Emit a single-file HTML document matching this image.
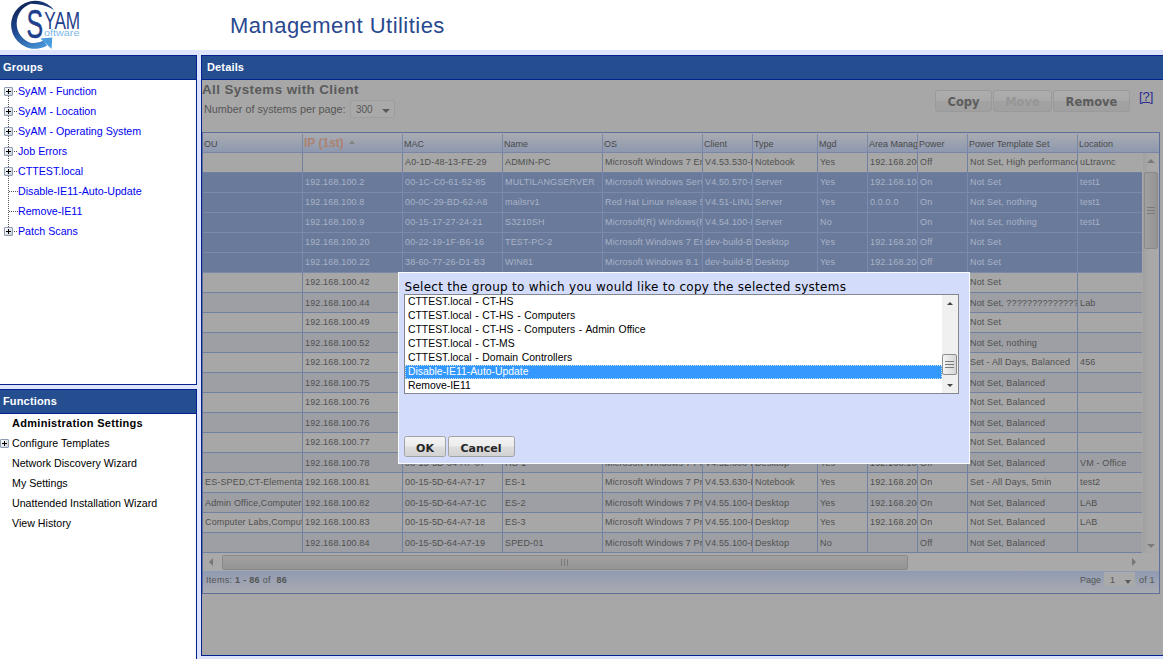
<!DOCTYPE html>
<html lang="en"><head><meta charset="utf-8"><title>Management Utilities</title>
<style>
html,body{margin:0;padding:0}
body{width:1163px;height:659px;overflow:hidden;position:relative;background:#dde4fb;font-family:"Liberation Sans",Arial,sans-serif;font-size:11px;color:#000}
div,span,i,a{box-sizing:border-box}
#hdr{position:absolute;left:0;top:0;width:1163px;height:50px;background:#fff}
#logo{position:absolute;left:0;top:0}
#title{position:absolute;left:230px;top:11px;font-size:22px;line-height:30px;color:#29498f;white-space:nowrap;letter-spacing:0.47px;font-family:"Liberation Sans",Arial,sans-serif}
.panel{position:absolute;border:1px solid #04228f;background:#fff;overflow:hidden}
.bar{position:absolute;left:0;top:0;right:0;height:23px;background:#254e91;border-bottom:1px solid #04228f;height:24px;color:#fff;font-weight:bold;font-size:11px;letter-spacing:0.15px;line-height:23px;padding-left:3px}
#groups{left:-1px;top:55px;width:198px;height:330px}
#funcs{left:-1px;top:389px;width:198px;height:300px}
#details{left:201px;top:55px;width:1000px;height:601px}
#details .bar{padding-left:5px}
/* tree */
.tn{position:absolute;left:0;height:20px;font-size:10.67px;line-height:20px;color:#0000f0;white-space:nowrap}
.tn .t{position:absolute;left:18px;top:-1px}
.pm{position:absolute;left:4px;top:5px;width:9px;height:9px;border:1px solid #8d9bb0;background:linear-gradient(135deg,#fff,#c9cfd8);border-radius:1px}
.pm:before{content:"";position:absolute;left:1px;top:3px;width:5px;height:1px;background:#000}
.pm:after{content:"";position:absolute;left:3px;top:1px;width:1px;height:5px;background:#000}
.dv{position:absolute;left:8px;width:1px;background-image:linear-gradient(#555 50%,transparent 50%);background-size:1px 2px}
.dh{position:absolute;top:9px;height:1px;background-image:linear-gradient(90deg,#555 50%,transparent 50%);background-size:2px 1px}
/* functions */
.fn{position:absolute;left:12px;height:20px;line-height:20px;font-size:10.67px;margin-top:-1px;color:#000;white-space:nowrap}
.fn.b{font-weight:bold;font-size:11px;letter-spacing:0.3px;margin-top:-1px}
/* overlay content */
#ov{position:absolute;left:0;top:24px;width:1000px;height:576px;background:#a7a7a7}
#h1{position:absolute;left:0px;top:1px;font-weight:bold;font-size:13.33px;letter-spacing:0.45px;line-height:18px;color:#5a5a5a;white-space:nowrap}
#npp{position:absolute;left:2px;top:21px;font-size:10.8px;line-height:16px;color:#565656;white-space:nowrap}
#sel300{position:absolute;left:148px;top:20px;width:45px;height:18px;border:1px solid #9e9e9e;border-radius:2px;background:#a9a9a9;font-size:10px;line-height:18px;color:#565656;padding-left:5px}
#sel300 i{position:absolute;right:4px;top:8px;border:4px solid transparent;border-top:4px solid #5a5a5a;border-bottom:0}
.btn{position:absolute;top:10px;height:22px;border:1px solid #9a9a9a;border-radius:3px;background:linear-gradient(#adadad 0,#a9a9a9 48%,#a2a2a2 52%,#a0a0a0);font-family:"DejaVu Sans",Verdana,sans-serif;font-weight:bold;font-size:11.5px;line-height:22px;text-align:center;color:#5c5c5c}
.btn.dis{color:#969696}
#help{position:absolute;left:937px;top:9px;font-size:13px;line-height:16px;color:#2b2b8f;text-decoration:underline}
/* grid */
#grid{position:absolute;left:0px;top:52px;width:958px;height:462px;border:1px solid #606f97;background:#a7a7a7;overflow:hidden}
#ghead{position:absolute;left:0;top:0;width:956px;height:20px;background:linear-gradient(#aaacb1,#8d98af);border-bottom:1px solid #7986a8}
.hc{position:absolute;top:1px;height:18px;font-size:9px;line-height:20px;color:#4a4a4a;padding-left:1px;white-space:nowrap;overflow:hidden;border-left:1px solid #7c88a8}
.hc:first-child{border-left:0;padding-left:1px}
.hc.sorted{font-size:12px;font-weight:bold;color:#ac8370;line-height:19px}
.sortup{display:inline-block;margin-left:5px;border:3.7px solid transparent;border-bottom:4.3px solid #868686;border-top:0;position:relative;top:-3px}
#gbody{position:absolute;left:0;top:20px;width:939px;height:400px;overflow:hidden}
.r{position:absolute;left:0;width:939px;height:20px;border-bottom:1px solid #7081a1;background:#a7a7a7}
.r.alt{background:#9d9fa4}
.r.sel{background:#697a9a;border-bottom-color:#7b8aaa}
.c{position:absolute;top:0;height:19px;font-size:9px;letter-spacing:0.15px;line-height:18px;color:#505050;padding-left:2px;white-space:pre;overflow:hidden;border-right:1px solid #7081a1}
.r.alt .c{line-height:20px}
.r.sel .c{color:#a9b3c8;border-right-color:#7b8aaa}
/* scrollbars */
#vsb{position:absolute;left:940px;top:20px;width:17px;height:400px;background:linear-gradient(90deg,#a0a0a0,#a8a8a8 35%)}
#hsb{position:absolute;left:0;top:420px;width:956px;height:18px;background:#a9a9a9}
.au,.ad,.al,.ar{position:absolute;width:0;height:0;border:4px solid transparent}
#vsb .au{left:4px;top:6px;border-bottom:4px solid #7a7a7a;border-top:0}
#vsb .ad{left:4px;bottom:5px;border-top:4px solid #7a7a7a;border-bottom:0}
#vsb .vth{position:absolute;left:1px;top:19px;width:14px;height:77px;border:1px solid #8a8a8a;border-radius:2px;background:linear-gradient(90deg,#a0a0a0,#949494)}
.vth i{position:absolute;left:2px;right:2px;top:50%;margin-top:-4px;height:7px;background:linear-gradient(#7a7a7a 1px,transparent 1px);background-size:100% 3px}
#hsb .al{left:6px;top:5px;border-right:4px solid #777;border-left:0}
#hsb .ar{right:23px;top:5px;border-left:4px solid #777;border-right:0}
#hsb .hth{position:absolute;left:19px;top:2px;width:686px;height:15px;border:1px solid #8a8a8a;border-radius:2px;background:linear-gradient(#a0a0a0,#949494)}
.hth i{position:absolute;top:3px;bottom:3px;left:50%;margin-left:-4px;width:7px;background:linear-gradient(90deg,#7a7a7a 1px,transparent 1px);background-size:3px 100%}
#pager{position:absolute;left:0;top:438px;width:956px;height:22px;background:linear-gradient(#909ab2,#a9abb0);font-size:9px;line-height:19px;color:#555}
#items{position:absolute;left:3px;top:0;white-space:pre;letter-spacing:0.3px}
#pg{position:absolute;left:877px;top:0}
#pgsel{position:absolute;left:901px;top:1px;width:31px;height:14px;background:#aaaaaa;line-height:17px;padding-left:6px}
#pgsel i{position:absolute;right:4px;top:8px;border:3.7px solid transparent;border-top:4px solid #5a5a5a;border-bottom:0}
#pgof{position:absolute;left:936px;top:0;white-space:nowrap;letter-spacing:0.2px}
/* dialog */
#dlg{position:absolute;left:398px;top:272px;width:572px;height:192px;background:#d3dcfb;border:1px solid #fbfcff}
#dt{position:absolute;left:5.5px;top:5px;font-family:"DejaVu Sans",Verdana,sans-serif;font-size:12px;letter-spacing:0.265px;line-height:18px;color:#000;white-space:nowrap}
#lb{position:absolute;left:5px;top:21px;width:555px;height:100px;border:1px solid #828790;background:#fff;overflow:hidden}
.li{height:14px;line-height:14px;font-size:10.4px;word-spacing:0.8px;padding-left:3px;width:537px;white-space:nowrap;color:#000}
.li.on{background:#3399ff;color:#fff;outline:1px dotted #cde;outline-offset:-1px}
#lsb{position:absolute;right:0;top:0;width:16px;height:98px;background:#f0f0f0}
#lsb .au{left:4.5px;top:7px;border-width:3.5px;border-bottom:3.5px solid #444;border-top:0}
#lsb .ad{left:4.5px;bottom:6px;border-width:3.5px;border-top:3.5px solid #444;border-bottom:0}
#lsb .vth{position:absolute;left:0px;top:59px;width:15px;height:21px;border:1px solid #8e8e8e;border-radius:2px;background:linear-gradient(90deg,#f4f4f4,#d6d6d6)}
.dbtn{position:absolute;top:163px;height:21px;padding-top:1px;border:1px solid #a3a3a3;border-radius:2.5px;background:linear-gradient(#f4f4f4 0,#ececec 45%,#dddddd 55%,#d2d2d2);font-family:"DejaVu Sans",Verdana,sans-serif;font-weight:bold;font-size:11px;line-height:22px;text-align:center;color:#262626}

.c:last-child{border-right:0}

</style></head>
<body>
<div id="hdr">
<svg id="logo" width="100" height="50" viewBox="0 0 100 50">
<defs><linearGradient id="lg" x1="0.1" y1="0" x2="0.6" y2="1"><stop offset="0" stop-color="#0a1d4a"/><stop offset="0.5" stop-color="#1f4790"/><stop offset="1" stop-color="#4590d2"/></linearGradient></defs>
<g transform="translate(0,0.5)"><path d="M54 9.5 A24 24 0 1 0 47 45.2 L43.5 40 C40 42 35 42.62 31 42.62 A20.66 20.66 0 0 1 31 3.3 Q44 3.4 54 9.5 Z" fill="url(#lg)"/>
<path d="M40.5 38 L52.3 37 L51.6 48.4 Z" fill="#4a9bdb"/></g>
<text x="26.6" y="38.3" font-family="Liberation Sans, Arial, sans-serif" font-size="40" fill="#1f3f8c" stroke="#1f3f8c" stroke-width="0.5" textLength="16.6" lengthAdjust="spacingAndGlyphs">S</text>
<text x="44.2" y="28.5" font-family="Liberation Sans, Arial, sans-serif" font-size="23" fill="#1f3f8c" textLength="36" lengthAdjust="spacingAndGlyphs">YAM</text>
<text x="44" y="36" font-family="Liberation Sans, Arial, sans-serif" font-size="9" fill="#7db8e8" textLength="35.5" lengthAdjust="spacingAndGlyphs">oftware</text>
</svg>
<div id="title">Management Utilities</div>
</div>
<div class="panel" id="groups"><div class="bar">Groups</div>
<div class="dv" style="top:40px;height:131px"></div>
<div class="tn" style="top:26px"><i class="pm"></i><i class="dh" style="left:14px;width:4px"></i><span class="t">SyAM - Function</span></div>
<div class="tn" style="top:46px"><i class="pm"></i><i class="dh" style="left:14px;width:4px"></i><span class="t">SyAM - Location</span></div>
<div class="tn" style="top:66px"><i class="pm"></i><i class="dh" style="left:14px;width:4px"></i><span class="t">SyAM - Operating System</span></div>
<div class="tn" style="top:86px"><i class="pm"></i><i class="dh" style="left:14px;width:4px"></i><span class="t">Job Errors</span></div>
<div class="tn" style="top:106px"><i class="pm"></i><i class="dh" style="left:14px;width:4px"></i><span class="t">CTTEST.local</span></div>
<div class="tn" style="top:126px"><i class="dh" style="left:9px;width:9px"></i><span class="t">Disable-IE11-Auto-Update</span></div>
<div class="tn" style="top:146px"><i class="dh" style="left:9px;width:9px"></i><span class="t">Remove-IE11</span></div>
<div class="tn" style="top:166px"><i class="pm"></i><i class="dh" style="left:14px;width:4px"></i><span class="t">Patch Scans</span></div>
</div>
<div class="panel" id="funcs"><div class="bar">Functions</div>
<div class="fn b" style="top:24px">Administration Settings</div>
<div class="fn" style="top:44px"><i class="pm" style="left:-12px;top:6px"></i>Configure Templates</div>
<div class="fn" style="top:64px">Network Discovery Wizard</div>
<div class="fn" style="top:84px">My Settings</div>
<div class="fn" style="top:104px">Unattended Installation Wizard</div>
<div class="fn" style="top:124px">View History</div>
</div>
<div class="panel" id="details"><div class="bar">Details</div>
<div id="ov">
<div id="h1">All Systems with Client</div>
<div id="npp">Number of systems per page:</div>
<div id="sel300">300<i></i></div>
<div class="btn" style="left:733px;width:57px">Copy</div>
<div class="btn dis" style="left:791px;width:59px">Move</div>
<div class="btn" style="left:851px;width:77px">Remove</div>
<a id="help">[?]</a>
<div id="grid">
<div id="ghead">
<div class="hc" style="left:0px;width:100px">OU</div>
<div class="hc sorted" style="left:99px;width:100px">IP (1st)<i class="sortup"></i></div>
<div class="hc" style="left:199px;width:100px">MAC</div>
<div class="hc" style="left:299px;width:100px">Name</div>
<div class="hc" style="left:399px;width:100px">OS</div>
<div class="hc" style="left:499px;width:50px">Client</div>
<div class="hc" style="left:549px;width:65px">Type</div>
<div class="hc" style="left:614px;width:50px">Mgd</div>
<div class="hc" style="left:664px;width:50px">Area Managed</div>
<div class="hc" style="left:714px;width:50px">Power</div>
<div class="hc" style="left:764px;width:110px">Power Template Set</div>
<div class="hc" style="left:874px;width:82px">Location</div>
</div>
<div id="gbody">
<div class="r" style="top:0px"><span class="c" style="left:0px;width:100px"></span><span class="c" style="left:100px;width:100px"></span><span class="c" style="left:200px;width:100px">A0-1D-48-13-FE-29</span><span class="c" style="left:300px;width:100px">ADMIN-PC</span><span class="c" style="left:400px;width:100px">Microsoft Windows 7 Enterprise</span><span class="c" style="left:500px;width:50px">V4.53.530-BUILD</span><span class="c" style="left:550px;width:65px">Notebook</span><span class="c" style="left:615px;width:50px">Yes</span><span class="c" style="left:665px;width:50px">192.168.200.1</span><span class="c" style="left:715px;width:50px">Off</span><span class="c" style="left:765px;width:110px">Not Set, High performance</span><span class="c" style="left:875px;width:64px">uLtravnc</span></div>
<div class="r sel" style="top:20px"><span class="c" style="left:0px;width:100px"></span><span class="c" style="left:100px;width:100px">192.168.100.2</span><span class="c" style="left:200px;width:100px">00-1C-C0-61-52-85</span><span class="c" style="left:300px;width:100px">MULTILANGSERVER</span><span class="c" style="left:400px;width:100px">Microsoft Windows Server 2008 R2</span><span class="c" style="left:500px;width:50px">V4.50.570-BUILD</span><span class="c" style="left:550px;width:65px">Server</span><span class="c" style="left:615px;width:50px">Yes</span><span class="c" style="left:665px;width:50px">192.168.100.1</span><span class="c" style="left:715px;width:50px">On</span><span class="c" style="left:765px;width:110px">Not Set</span><span class="c" style="left:875px;width:64px">test1</span></div>
<div class="r sel" style="top:40px"><span class="c" style="left:0px;width:100px"></span><span class="c" style="left:100px;width:100px">192.168.100.8</span><span class="c" style="left:200px;width:100px">00-0C-29-BD-62-A8</span><span class="c" style="left:300px;width:100px">mailsrv1</span><span class="c" style="left:400px;width:100px">Red Hat Linux release 5.4</span><span class="c" style="left:500px;width:50px">V4.51-LINUX</span><span class="c" style="left:550px;width:65px">Server</span><span class="c" style="left:615px;width:50px">Yes</span><span class="c" style="left:665px;width:50px">0.0.0.0</span><span class="c" style="left:715px;width:50px">On</span><span class="c" style="left:765px;width:110px">Not Set, nothing</span><span class="c" style="left:875px;width:64px">test1</span></div>
<div class="r sel" style="top:60px"><span class="c" style="left:0px;width:100px"></span><span class="c" style="left:100px;width:100px">192.168.100.9</span><span class="c" style="left:200px;width:100px">00-15-17-27-24-21</span><span class="c" style="left:300px;width:100px">S3210SH</span><span class="c" style="left:400px;width:100px">Microsoft(R) Windows(R) Server 2003</span><span class="c" style="left:500px;width:50px">V4.54.100-BUILD</span><span class="c" style="left:550px;width:65px">Server</span><span class="c" style="left:615px;width:50px">No</span><span class="c" style="left:665px;width:50px"></span><span class="c" style="left:715px;width:50px">On</span><span class="c" style="left:765px;width:110px">Not Set, nothing</span><span class="c" style="left:875px;width:64px">test1</span></div>
<div class="r sel" style="top:80px"><span class="c" style="left:0px;width:100px"></span><span class="c" style="left:100px;width:100px">192.168.100.20</span><span class="c" style="left:200px;width:100px">00-22-19-1F-B6-16</span><span class="c" style="left:300px;width:100px">TEST-PC-2</span><span class="c" style="left:400px;width:100px">Microsoft Windows 7 Enterprise</span><span class="c" style="left:500px;width:50px">dev-build-BETA</span><span class="c" style="left:550px;width:65px">Desktop</span><span class="c" style="left:615px;width:50px">Yes</span><span class="c" style="left:665px;width:50px">192.168.200.1</span><span class="c" style="left:715px;width:50px">Off</span><span class="c" style="left:765px;width:110px">Not Set</span><span class="c" style="left:875px;width:64px"></span></div>
<div class="r sel" style="top:100px"><span class="c" style="left:0px;width:100px"></span><span class="c" style="left:100px;width:100px">192.168.100.22</span><span class="c" style="left:200px;width:100px">38-60-77-26-D1-B3</span><span class="c" style="left:300px;width:100px">WIN81</span><span class="c" style="left:400px;width:100px">Microsoft Windows 8.1 Pro</span><span class="c" style="left:500px;width:50px">dev-build-BETA</span><span class="c" style="left:550px;width:65px">Desktop</span><span class="c" style="left:615px;width:50px">Yes</span><span class="c" style="left:665px;width:50px">192.168.200.1</span><span class="c" style="left:715px;width:50px">Off</span><span class="c" style="left:765px;width:110px">Not Set</span><span class="c" style="left:875px;width:64px"></span></div>
<div class="r" style="top:120px"><span class="c" style="left:0px;width:100px"></span><span class="c" style="left:100px;width:100px">192.168.100.42</span><span class="c" style="left:200px;width:100px"></span><span class="c" style="left:300px;width:100px"></span><span class="c" style="left:400px;width:100px"></span><span class="c" style="left:500px;width:50px"></span><span class="c" style="left:550px;width:65px"></span><span class="c" style="left:615px;width:50px"></span><span class="c" style="left:665px;width:50px"></span><span class="c" style="left:715px;width:50px"></span><span class="c" style="left:765px;width:110px">Not Set</span><span class="c" style="left:875px;width:64px"></span></div>
<div class="r alt" style="top:140px"><span class="c" style="left:0px;width:100px"></span><span class="c" style="left:100px;width:100px">192.168.100.44</span><span class="c" style="left:200px;width:100px"></span><span class="c" style="left:300px;width:100px"></span><span class="c" style="left:400px;width:100px"></span><span class="c" style="left:500px;width:50px"></span><span class="c" style="left:550px;width:65px"></span><span class="c" style="left:615px;width:50px"></span><span class="c" style="left:665px;width:50px"></span><span class="c" style="left:715px;width:50px"></span><span class="c" style="left:765px;width:110px">Not Set, ??????????????</span><span class="c" style="left:875px;width:64px">Lab</span></div>
<div class="r" style="top:160px"><span class="c" style="left:0px;width:100px"></span><span class="c" style="left:100px;width:100px">192.168.100.49</span><span class="c" style="left:200px;width:100px"></span><span class="c" style="left:300px;width:100px"></span><span class="c" style="left:400px;width:100px"></span><span class="c" style="left:500px;width:50px"></span><span class="c" style="left:550px;width:65px"></span><span class="c" style="left:615px;width:50px"></span><span class="c" style="left:665px;width:50px"></span><span class="c" style="left:715px;width:50px"></span><span class="c" style="left:765px;width:110px">Not Set</span><span class="c" style="left:875px;width:64px"></span></div>
<div class="r alt" style="top:180px"><span class="c" style="left:0px;width:100px"></span><span class="c" style="left:100px;width:100px">192.168.100.52</span><span class="c" style="left:200px;width:100px"></span><span class="c" style="left:300px;width:100px"></span><span class="c" style="left:400px;width:100px"></span><span class="c" style="left:500px;width:50px"></span><span class="c" style="left:550px;width:65px"></span><span class="c" style="left:615px;width:50px"></span><span class="c" style="left:665px;width:50px"></span><span class="c" style="left:715px;width:50px"></span><span class="c" style="left:765px;width:110px">Not Set, nothing</span><span class="c" style="left:875px;width:64px"></span></div>
<div class="r" style="top:200px"><span class="c" style="left:0px;width:100px"></span><span class="c" style="left:100px;width:100px">192.168.100.72</span><span class="c" style="left:200px;width:100px"></span><span class="c" style="left:300px;width:100px"></span><span class="c" style="left:400px;width:100px"></span><span class="c" style="left:500px;width:50px"></span><span class="c" style="left:550px;width:65px"></span><span class="c" style="left:615px;width:50px"></span><span class="c" style="left:665px;width:50px"></span><span class="c" style="left:715px;width:50px"></span><span class="c" style="left:765px;width:110px">Set - All Days, Balanced</span><span class="c" style="left:875px;width:64px">456</span></div>
<div class="r alt" style="top:220px"><span class="c" style="left:0px;width:100px"></span><span class="c" style="left:100px;width:100px">192.168.100.75</span><span class="c" style="left:200px;width:100px"></span><span class="c" style="left:300px;width:100px"></span><span class="c" style="left:400px;width:100px"></span><span class="c" style="left:500px;width:50px"></span><span class="c" style="left:550px;width:65px"></span><span class="c" style="left:615px;width:50px"></span><span class="c" style="left:665px;width:50px"></span><span class="c" style="left:715px;width:50px"></span><span class="c" style="left:765px;width:110px">Not Set, Balanced</span><span class="c" style="left:875px;width:64px"></span></div>
<div class="r" style="top:240px"><span class="c" style="left:0px;width:100px"></span><span class="c" style="left:100px;width:100px">192.168.100.76</span><span class="c" style="left:200px;width:100px"></span><span class="c" style="left:300px;width:100px"></span><span class="c" style="left:400px;width:100px"></span><span class="c" style="left:500px;width:50px"></span><span class="c" style="left:550px;width:65px"></span><span class="c" style="left:615px;width:50px"></span><span class="c" style="left:665px;width:50px"></span><span class="c" style="left:715px;width:50px"></span><span class="c" style="left:765px;width:110px">Not Set, Balanced</span><span class="c" style="left:875px;width:64px"></span></div>
<div class="r alt" style="top:260px"><span class="c" style="left:0px;width:100px"></span><span class="c" style="left:100px;width:100px">192.168.100.76</span><span class="c" style="left:200px;width:100px"></span><span class="c" style="left:300px;width:100px"></span><span class="c" style="left:400px;width:100px"></span><span class="c" style="left:500px;width:50px"></span><span class="c" style="left:550px;width:65px"></span><span class="c" style="left:615px;width:50px"></span><span class="c" style="left:665px;width:50px"></span><span class="c" style="left:715px;width:50px"></span><span class="c" style="left:765px;width:110px">Not Set, Balanced</span><span class="c" style="left:875px;width:64px"></span></div>
<div class="r" style="top:280px"><span class="c" style="left:0px;width:100px"></span><span class="c" style="left:100px;width:100px">192.168.100.77</span><span class="c" style="left:200px;width:100px"></span><span class="c" style="left:300px;width:100px"></span><span class="c" style="left:400px;width:100px"></span><span class="c" style="left:500px;width:50px"></span><span class="c" style="left:550px;width:65px"></span><span class="c" style="left:615px;width:50px"></span><span class="c" style="left:665px;width:50px"></span><span class="c" style="left:715px;width:50px"></span><span class="c" style="left:765px;width:110px">Not Set, Balanced</span><span class="c" style="left:875px;width:64px"></span></div>
<div class="r alt" style="top:300px"><span class="c" style="left:0px;width:100px"></span><span class="c" style="left:100px;width:100px">192.168.100.78</span><span class="c" style="left:200px;width:100px">00-15-5D-64-A7-07</span><span class="c" style="left:300px;width:100px">HS-1</span><span class="c" style="left:400px;width:100px">Microsoft Windows 7 Professional</span><span class="c" style="left:500px;width:50px">V4.52.000-BUILD</span><span class="c" style="left:550px;width:65px">Desktop</span><span class="c" style="left:615px;width:50px">Yes</span><span class="c" style="left:665px;width:50px">192.168.100.1</span><span class="c" style="left:715px;width:50px">Off</span><span class="c" style="left:765px;width:110px">Not Set, Balanced</span><span class="c" style="left:875px;width:64px">VM - Office</span></div>
<div class="r" style="top:320px"><span class="c" style="left:0px;width:100px">ES-SPED,CT-Elementary</span><span class="c" style="left:100px;width:100px">192.168.100.81</span><span class="c" style="left:200px;width:100px">00-15-5D-64-A7-17</span><span class="c" style="left:300px;width:100px">ES-1</span><span class="c" style="left:400px;width:100px">Microsoft Windows 7 Professional</span><span class="c" style="left:500px;width:50px">V4.53.630-BUILD</span><span class="c" style="left:550px;width:65px">Notebook</span><span class="c" style="left:615px;width:50px">Yes</span><span class="c" style="left:665px;width:50px">192.168.200.1</span><span class="c" style="left:715px;width:50px">On</span><span class="c" style="left:765px;width:110px">Set - All Days, 5min</span><span class="c" style="left:875px;width:64px">test2</span></div>
<div class="r alt" style="top:340px"><span class="c" style="left:0px;width:100px">Admin Office,Computers</span><span class="c" style="left:100px;width:100px">192.168.100.82</span><span class="c" style="left:200px;width:100px">00-15-5D-64-A7-1C</span><span class="c" style="left:300px;width:100px">ES-2</span><span class="c" style="left:400px;width:100px">Microsoft Windows 7 Professional</span><span class="c" style="left:500px;width:50px">V4.55.100-BUILD</span><span class="c" style="left:550px;width:65px">Desktop</span><span class="c" style="left:615px;width:50px">Yes</span><span class="c" style="left:665px;width:50px">192.168.200.1</span><span class="c" style="left:715px;width:50px">On</span><span class="c" style="left:765px;width:110px">Not Set, Balanced</span><span class="c" style="left:875px;width:64px">LAB</span></div>
<div class="r" style="top:360px"><span class="c" style="left:0px;width:100px">Computer Labs,Computers</span><span class="c" style="left:100px;width:100px">192.168.100.83</span><span class="c" style="left:200px;width:100px">00-15-5D-64-A7-18</span><span class="c" style="left:300px;width:100px">ES-3</span><span class="c" style="left:400px;width:100px">Microsoft Windows 7 Professional</span><span class="c" style="left:500px;width:50px">V4.55.100-BUILD</span><span class="c" style="left:550px;width:65px">Desktop</span><span class="c" style="left:615px;width:50px">Yes</span><span class="c" style="left:665px;width:50px">192.168.200.1</span><span class="c" style="left:715px;width:50px">On</span><span class="c" style="left:765px;width:110px">Not Set, Balanced</span><span class="c" style="left:875px;width:64px">LAB</span></div>
<div class="r alt" style="top:380px"><span class="c" style="left:0px;width:100px"></span><span class="c" style="left:100px;width:100px">192.168.100.84</span><span class="c" style="left:200px;width:100px">00-15-5D-64-A7-19</span><span class="c" style="left:300px;width:100px">SPED-01</span><span class="c" style="left:400px;width:100px">Microsoft Windows 7 Professional</span><span class="c" style="left:500px;width:50px">V4.55.100-BUILD</span><span class="c" style="left:550px;width:65px">Desktop</span><span class="c" style="left:615px;width:50px">No</span><span class="c" style="left:665px;width:50px"></span><span class="c" style="left:715px;width:50px">Off</span><span class="c" style="left:765px;width:110px">Not Set, Balanced</span><span class="c" style="left:875px;width:64px"></span></div>
<div class="r" style="top:400px"><span class="c" style="left:0px;width:100px"></span><span class="c" style="left:100px;width:100px">192.168.100.85</span><span class="c" style="left:200px;width:100px"></span><span class="c" style="left:300px;width:100px"></span><span class="c" style="left:400px;width:100px"></span><span class="c" style="left:500px;width:50px"></span><span class="c" style="left:550px;width:65px"></span><span class="c" style="left:615px;width:50px"></span><span class="c" style="left:665px;width:50px"></span><span class="c" style="left:715px;width:50px"></span><span class="c" style="left:765px;width:110px"></span><span class="c" style="left:875px;width:64px"></span></div>
</div>
<div id="vsb"><i class="au"></i><div class="vth"><i></i></div><i class="ad"></i></div>
<div id="hsb"><i class="al"></i><div class="hth"><i></i></div><i class="ar"></i></div>
<div id="pager"><span id="items">Items: <b>1 - 86</b> of&nbsp; <b>86</b></span><span id="pg">Page</span><div id="pgsel">1<i></i></div><span id="pgof">of 1</span></div>
</div>
</div></div>
<div id="dlg">
<div id="dt">Select the group to which you would like to copy the selected systems</div>
<div id="lb">
<div class="li">CTTEST.local - CT-HS</div>
<div class="li">CTTEST.local - CT-HS - Computers</div>
<div class="li">CTTEST.local - CT-HS - Computers - Admin Office</div>
<div class="li">CTTEST.local - CT-MS</div>
<div class="li">CTTEST.local - Domain Controllers</div>
<div class="li on">Disable-IE11-Auto-Update</div>
<div class="li">Remove-IE11</div>
<div id="lsb"><i class="au"></i><div class="vth"><i></i></div><i class="ad"></i></div>
</div>
<div class="dbtn" style="left:5px;width:42px">OK</div>
<div class="dbtn" style="left:48.5px;width:67px">Cancel</div>
</div>
</body></html>
